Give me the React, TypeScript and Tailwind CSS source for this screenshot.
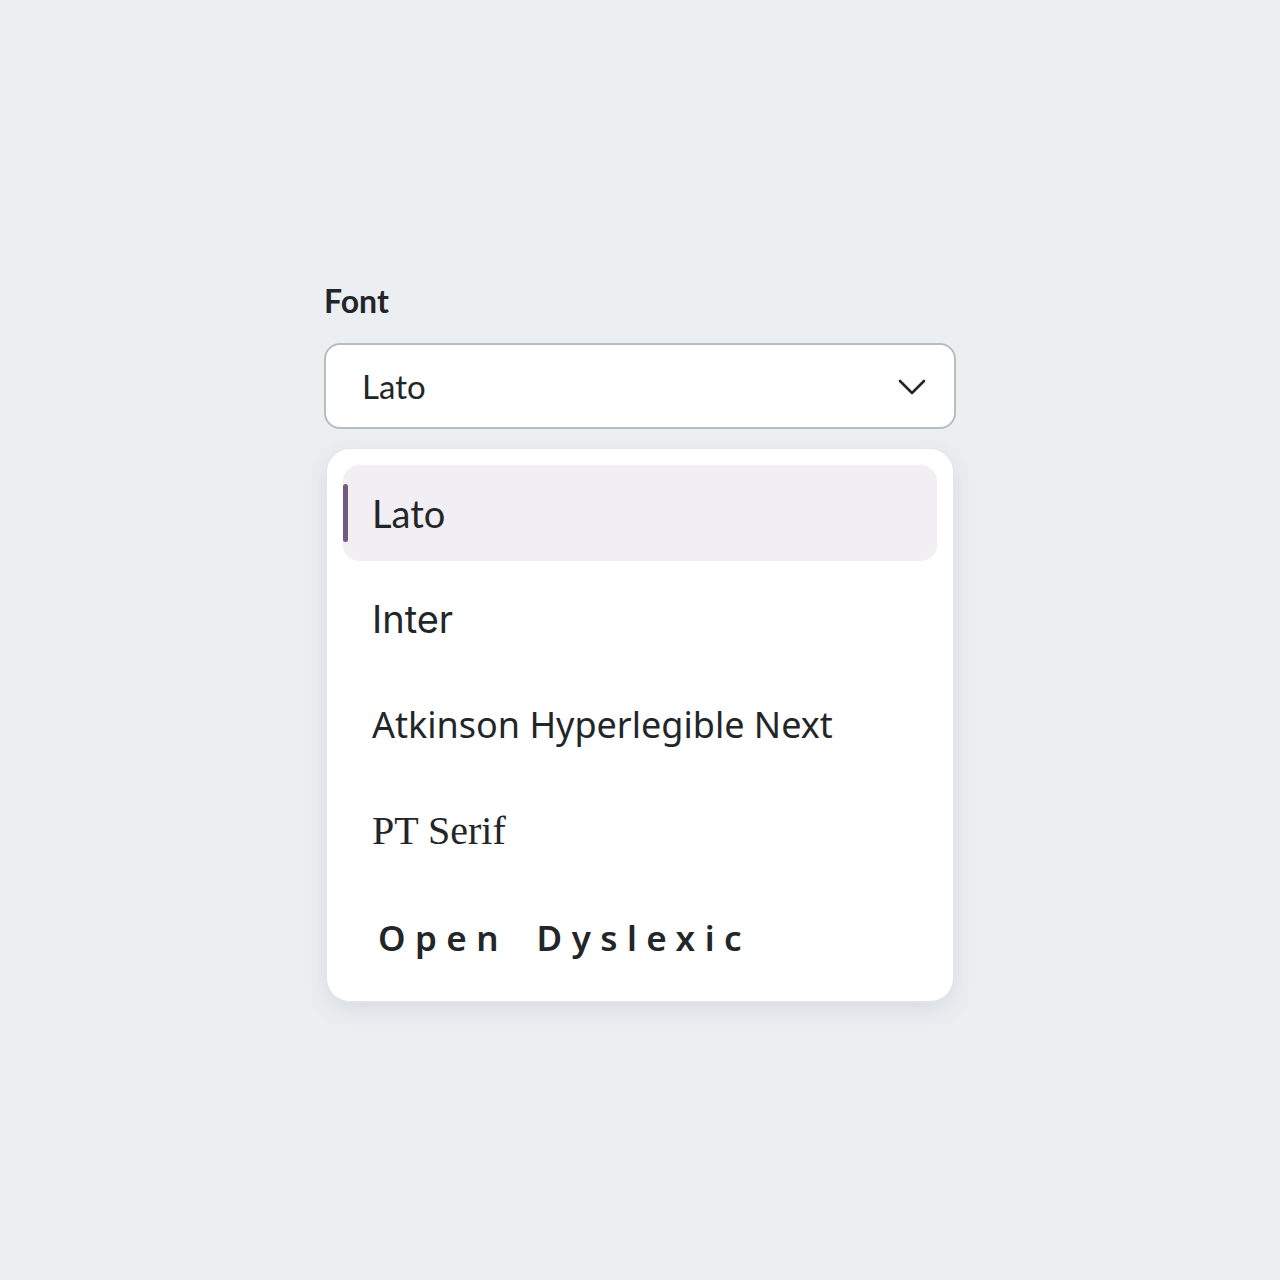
const fonts = [
  { name: "Lato", family: "font-['Lato',sans-serif] text-[38px]" },
  { name: "Inter", family: "font-['Inter',sans-serif] text-[38px]" },
  { name: "Atkinson Hyperlegible Next", family: "font-['Noto_Sans',sans-serif] text-[36px]" },
  { name: "PT Serif", family: "font-['Liberation_Serif',serif] text-[40px]" },
  { name: "Open Dyslexic", family: "font-['Noto_Sans',sans-serif] text-[35px] font-semibold tracking-[0.27em] [word-spacing:10px] pl-[6px]" },
];

export default function App() {
  return (
    <div className="min-h-[1280px] w-full bg-[#eceff2] font-['Lato',sans-serif] text-[#222629]">
      <div className="mx-auto w-[632px] pt-[281px]">
        {/* Label */}
        <label className="block text-[32px] font-bold leading-[40px] mb-[22px]">Font</label>

        {/* Select trigger */}
        <button className="w-full h-[86px] rounded-[16px] border-2 border-[#b9bcc0] bg-white flex items-center justify-between pl-[36px] pr-[28px]">
          <span className="text-[33px] leading-none">Lato</span>
          <svg width="28" height="16" viewBox="0 0 28 16" fill="none" className="mt-[1px]">
            <path d="M2 2 L14 14 L26 2" stroke="#222629" strokeWidth="2.6" strokeLinecap="round" strokeLinejoin="round" />
          </svg>
        </button>

        {/* Options list */}
        <div className="mt-[19px] mx-[2px] rounded-[24px] bg-white border border-[#e3e6e9] shadow-[0_8px_24px_rgba(30,40,55,0.10)] p-[16px] flex flex-col gap-[10px]">
          {fonts.map((f, i) => (
            <div
              key={f.name}
              className={
                "relative h-[96px] rounded-[16px] flex items-center pl-[29px] " +
                (i === 0 ? "bg-[#f2eff4]" : "")
              }
            >
              {i === 0 && (
                <span className="absolute left-0 top-[19px] h-[58px] w-[5px] rounded-full bg-[#735a82]" />
              )}
              <span className={f.family + " leading-none"}>{f.name}</span>
            </div>
          ))}
        </div>
      </div>
    </div>
  );
}
